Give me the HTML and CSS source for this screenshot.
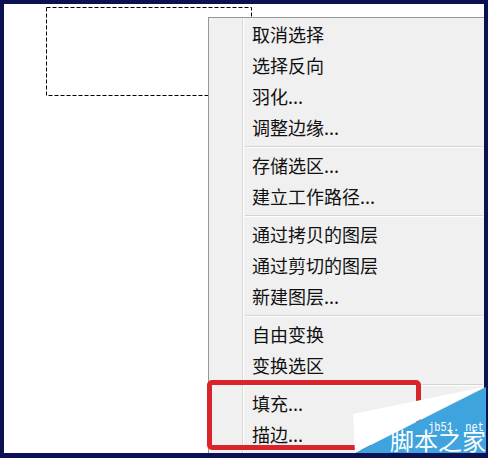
FILE: index.html
```html
<!DOCTYPE html>
<html lang="zh-CN">
<head>
<meta charset="utf-8">
<title>选区菜单</title>
<link rel="stylesheet" href="styles.css">
</head>
<body>
<div class="frame">
  <svg class="marquee" width="207" height="90" viewBox="0 0 207 90">
    <rect x="0.5" y="0.5" width="205" height="88" fill="none" stroke="#000" stroke-width="1" stroke-dasharray="4 2"/>
  </svg>
  <div class="menu">
    <div class="item">取消选择</div>
    <div class="item">选择反向</div>
    <div class="item">羽化...</div>
    <div class="item">调整边缘...</div>
    <div class="sep"></div>
    <div class="item">存储选区...</div>
    <div class="item">建立工作路径...</div>
    <div class="sep"></div>
    <div class="item">通过拷贝的图层</div>
    <div class="item">通过剪切的图层</div>
    <div class="item">新建图层...</div>
    <div class="sep"></div>
    <div class="item">自由变换</div>
    <div class="item">变换选区</div>
    <div class="sep"></div>
    <div class="item">填充...</div>
    <div class="item">描边...</div>
  </div>
  <div class="highlight"></div>
</div>
<svg class="watermark" width="140" height="75" viewBox="0 0 140 75">
  <polygon points="5,31 136,4 7,70" fill="#ffffff"/>
  <polygon points="7,70 138,4 138,70" fill="#3fa3dd"/>
  <text class="wm-url" x="80" y="48" textLength="56" lengthAdjust="spacingAndGlyphs">jb51. net</text>
  <text class="wm-name" x="42" y="67">脚本之家</text>
</svg>
</body>
</html>
```

FILE: styles.css
```css
html, body {
  margin: 0;
  padding: 0;
}
body {
  position: relative;
  background: #0b1152;
  width: 488px;
  height: 458px;
  overflow: hidden;
}
.frame {
  position: relative;
  margin: 4px 4px 0 4px;
  width: 480px;
  height: 449px;
  background: #ffffff;
  overflow: hidden;
  font-family: "Noto Sans CJK SC", "Noto Sans", sans-serif;
}
.marquee {
  position: absolute;
  left: 42px;
  top: 3px;
  display: block;
}
.menu {
  position: absolute;
  left: 204px;
  top: 13px;
  width: 300px;
  height: 460px;
  box-sizing: border-box;
  background: #f0f0f0;
  border-top: 1px solid #979797;
  border-left: 1px solid #979797;
  padding: 1px 24px 0 0;
  background-image: linear-gradient(to right, transparent 33px, #d8d8d8 33px, #d8d8d8 34px, #ffffff 34px, #ffffff 35px, transparent 35px);
}
.item {
  height: 31px;
  line-height: 31px;
  padding-left: 43px;
  font-size: 18px;
  color: #111;
  white-space: nowrap;
}
.sep {
  height: 7px;
  margin-left: 36px;
  margin-right: 1px;
  background-image: linear-gradient(to bottom, transparent 3px, #d3d3d3 3px, #d3d3d3 4px, #ffffff 4px, #ffffff 5px, transparent 5px);
}
.highlight {
  position: absolute;
  left: 203px;
  top: 376px;
  width: 214px;
  height: 70px;
  box-sizing: border-box;
  border: 5px solid #d9242c;
  border-radius: 5px;
}
.watermark {
  position: absolute;
  left: 348px;
  top: 383px;
  display: block;
}
.wm-url {
  font-family: "Liberation Mono", "DejaVu Sans Mono", monospace;
  font-size: 12px;
  fill: #ffffff;
}
.wm-name {
  font-family: "Noto Sans CJK SC", sans-serif;
  font-size: 24px;
  fill: #ffffff;
}
```
